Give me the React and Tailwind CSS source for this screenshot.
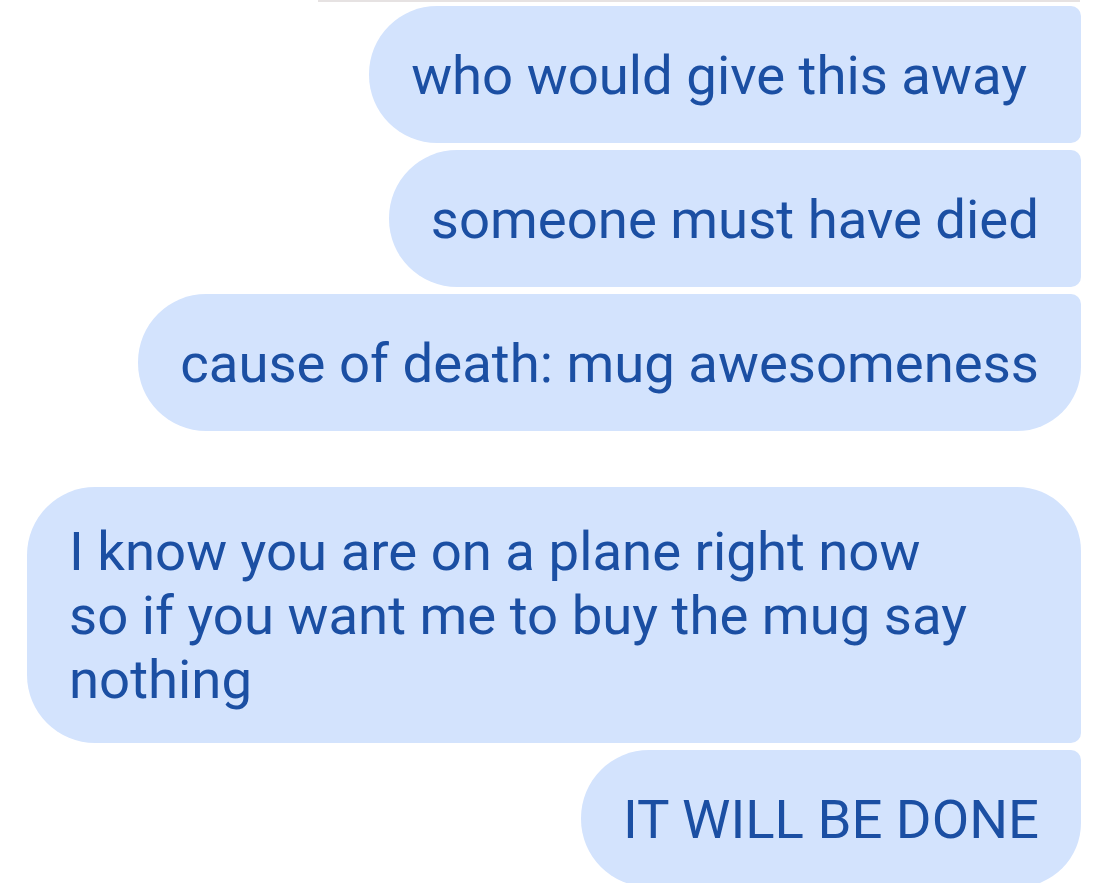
const messages = [
  { text: "who would give this away", tr: "rounded-tr-[10px]", br: "rounded-br-[10px]", pr: "pr-[54px]" },
  { text: "someone must have died", tr: "rounded-tr-[10px]", br: "rounded-br-[10px]" },
  { text: "cause of death: mug awesomeness", tr: "rounded-tr-[10px]", br: "rounded-br-[64px]" },
  {
    text: "I know you are on a plane right now so if you want me to buy the mug say nothing",
    tr: "rounded-tr-[64px]",
    br: "rounded-br-[10px]",
    gap: true,
    wide: true,
  },
  { text: "IT WILL BE DONE", tr: "rounded-tr-[10px]", br: "rounded-br-[64px]" },
];

const Bubble = ({ text, tr, br, gap, wide, pr }) => (
  <div
    className={`flex items-center min-h-[137px] py-[32px] pl-[42px] ${pr || "pr-[42px]"} bg-[#d3e3fd] text-[#1b4fa3] rounded-tl-[68px] rounded-bl-[68px] ${tr} ${br} ${
      gap ? "mt-[56px]" : "mt-[7px]"
    } ${wide ? "self-stretch" : ""}`}
  >
    <p className={`text-[54.5px] leading-[64px] ${wide ? "max-w-[915px]" : ""}`}>{text}</p>
  </div>
);

export default function App() {
  return (
    <div
      className="min-h-screen bg-white overflow-hidden"
      style={{ fontFamily: "Roboto, 'Liberation Sans', sans-serif" }}
    >
      <div className="ml-[318px] mr-[29px] h-[2px] bg-[#e6e2e2]" />
      <div className="flex flex-col items-end pl-[27px] pr-[28px] -mt-[3px]">
        {messages.map((m, i) => (
          <Bubble key={i} {...m} />
        ))}
      </div>
    </div>
  );
}
